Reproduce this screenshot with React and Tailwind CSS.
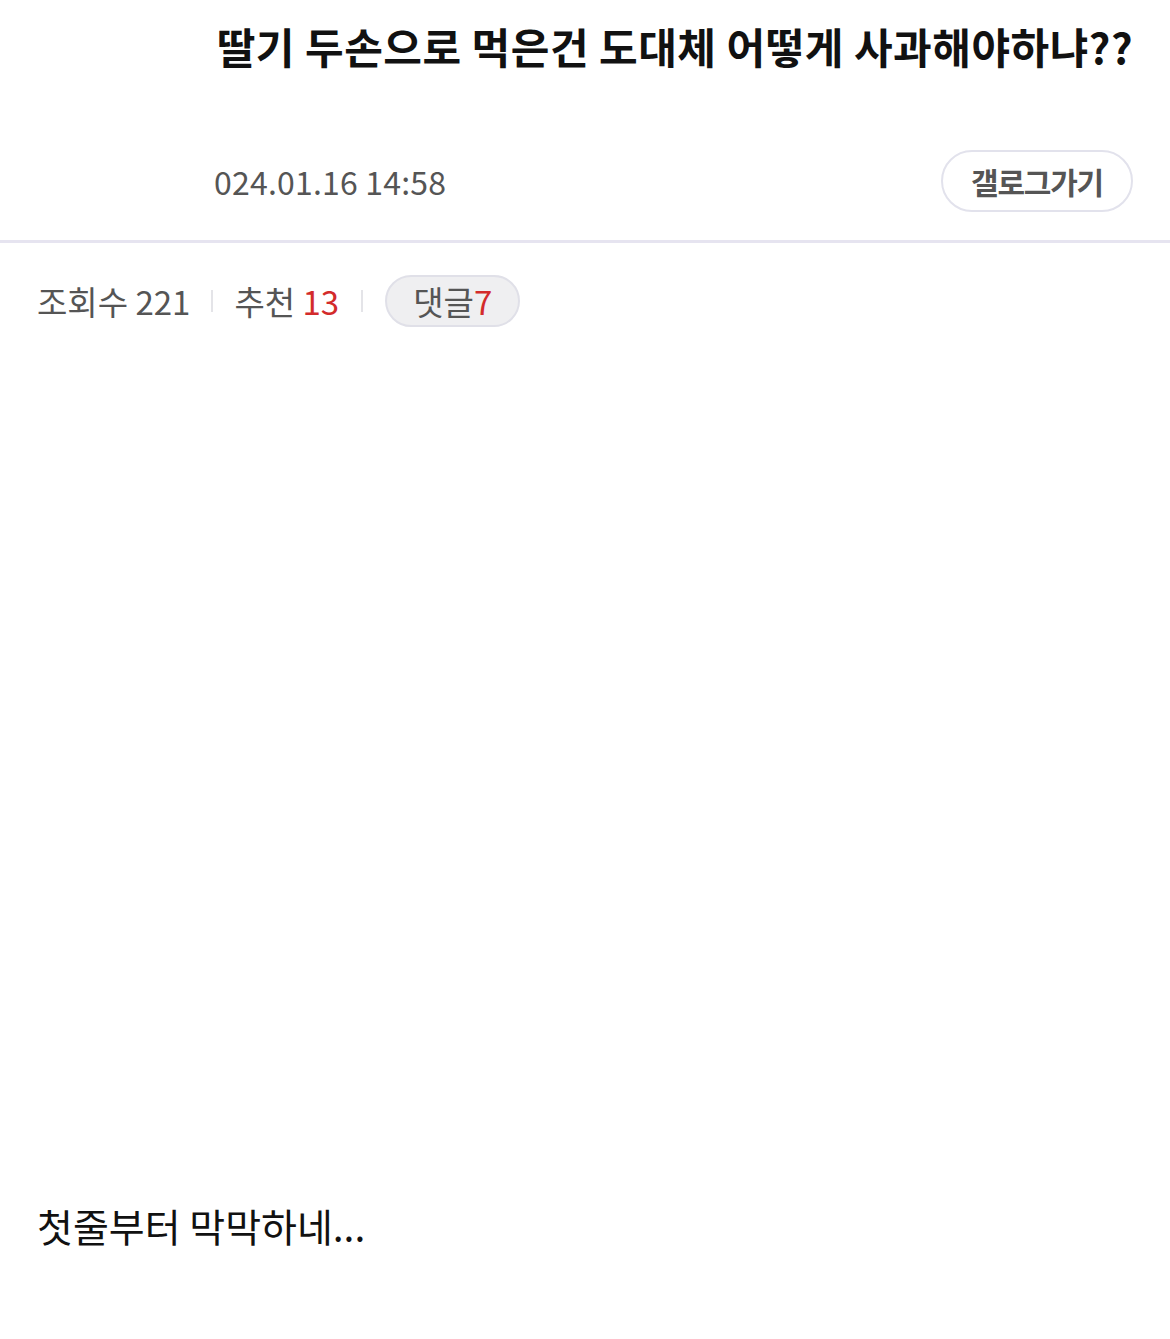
export default function App() {
  return (
    <div
      className="min-h-[1339px] w-[1170px] bg-white text-black"
      style={{ fontFamily: '"Noto Sans CJK KR", "Noto Sans", sans-serif' }}
    >
      <div className="flex justify-end pr-[37px] pt-[16px]">
        <h1 className="text-[42px] font-bold leading-[60px] tracking-[0.5px] text-[#111]">
          딸기 두손으로 먹은건 도대체 어떻게 사과해야하냐??
        </h1>
      </div>

      <div className="mt-[74px] flex items-center justify-between pb-[28px] pr-[37px]">
        <span className="ml-[214px] text-[32px] leading-[40px] tracking-[0.2px] text-[#555]">
          024.01.16 14:58
        </span>
        <button
          type="button"
          className="flex h-[62px] w-[192px] items-center justify-center rounded-full border-2 border-[#e2e2ec] text-[30px] font-bold tracking-[-1.2px] text-[#555]"
        >
          갤로그가기
        </button>
      </div>

      <div className="h-[3px] w-full bg-[#e6e4f0]" />

      <div className="flex items-center px-[37px] pt-[32px]">
        <span className="text-[33px] leading-[40px] text-[#555]">조회수 221</span>
        <span className="mx-[21px] h-[22px] w-[2px] bg-[#e4e4e8]" />
        <span className="text-[33px] leading-[40px] text-[#555]">
          추천 <span className="text-[#d32b2b]">13</span>
        </span>
        <span className="mx-[22px] h-[22px] w-[2px] bg-[#e4e4e8]" />
        <span className="flex h-[52px] w-[135px] items-center justify-center rounded-full border-2 border-[#e0e0e8] bg-[#efeff1] text-[33px] leading-[40px] text-[#555]">
          댓글<span className="text-[#d32b2b]">7</span>
        </span>
      </div>

      <div className="px-[37px] pt-[870px]">
        <p className="text-[39px] leading-[56px] text-[#111]">첫줄부터 막막하네...</p>
      </div>
    </div>
  )
}
